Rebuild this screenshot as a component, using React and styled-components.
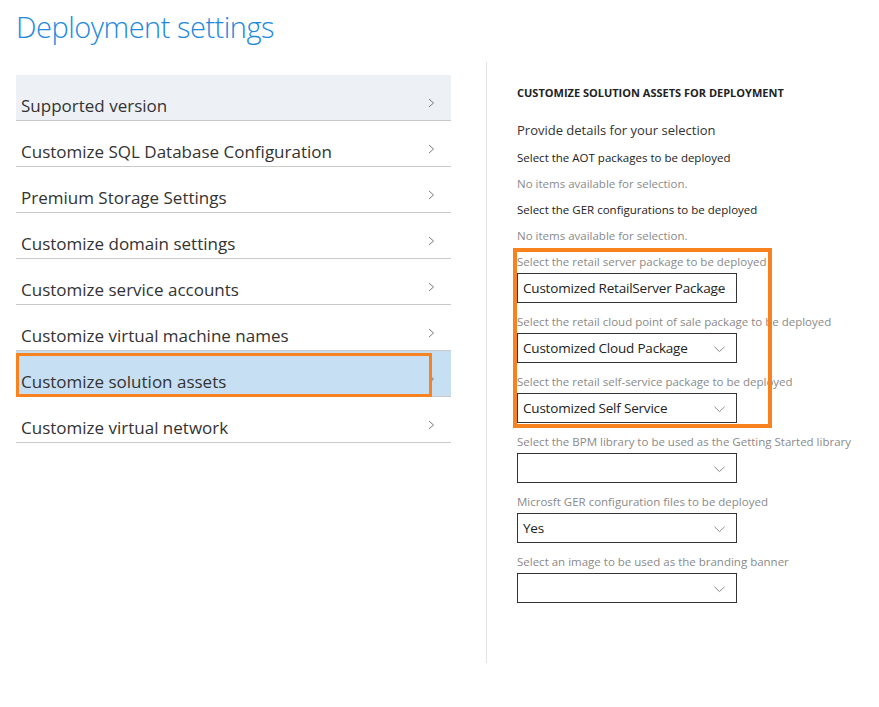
import React from "react";
import styled, { createGlobalStyle } from "styled-components";

const GlobalStyle = createGlobalStyle`
  html, body {
    margin: 0;
    padding: 0;
    background: #ffffff;
  }
  body {
    font-family: "Open Sans", "Noto Sans", sans-serif;
    color: #333;
  }
`;

const menuItems = [
  { label: "Supported version", hover: true },
  { label: "Customize SQL Database Configuration" },
  { label: "Premium Storage Settings" },
  { label: "Customize domain settings" },
  { label: "Customize service accounts" },
  { label: "Customize virtual machine names" },
  { label: "Customize solution assets", selected: true },
  { label: "Customize virtual network" },
];

const fields = [
  { label: "Select the retail server package to be deployed", value: "Customized RetailServer Package", marked: true },
  { label: "Select the retail cloud point of sale package to be deployed", value: "Customized Cloud Package", marked: true },
  { label: "Select the retail self-service package to be deployed", value: "Customized Self Service", marked: true },
  { label: "Select the BPM library to be used as the Getting Started library", value: "" },
  { label: "Microsft GER configuration files to be deployed", value: "Yes" },
  { label: "Select an image to be used as the branding banner", value: "" },
];

const Chevron = ({ className }) => (
  <svg className={className} width="7" height="10" viewBox="0 0 7 10" fill="none">
    <path d="M1 1 L5.5 5 L1 9" stroke="#7a7a7a" strokeWidth="1" />
  </svg>
);

const DownChevron = ({ className }) => (
  <svg className={className} width="11" height="7" viewBox="0 0 11 7" fill="none">
    <path d="M0.5 0.8 L5.5 5.6 L10.5 0.8" stroke="#8a8a8a" strokeWidth="1" />
  </svg>
);

const Settings = ({ label, value }) => (
  <Field>
    <FieldLabel>{label}</FieldLabel>
    <SelectBox>
      <SelectValue>{value}</SelectValue>
      <SelectArrow />
    </SelectBox>
  </Field>
);

const App = () => {
  const marked = fields.filter((f) => f.marked);
  const rest = fields.filter((f) => !f.marked);
  return (
    <>
      <GlobalStyle />
      <Page>
        <Title>Deployment settings</Title>
        <Main>
          <Menu>
            {menuItems.map((item) => (
              <MenuRow key={item.label} $hover={item.hover} $selected={item.selected}>
                <MenuText>{item.label}</MenuText>
                <RowChevron />
              </MenuRow>
            ))}
          </Menu>
          <Divider />
          <Details>
            <Heading>CUSTOMIZE SOLUTION ASSETS FOR DEPLOYMENT</Heading>
            <Intro>Provide details for your selection</Intro>
            <InfoLine>Select the AOT packages to be deployed</InfoLine>
            <InfoLine $muted>No items available for selection.</InfoLine>
            <InfoLine>Select the GER configurations to be deployed</InfoLine>
            <InfoLine $muted>No items available for selection.</InfoLine>
            <Fields>
              <Highlight>
                {marked.map((f) => (
                  <Settings key={f.label} label={f.label} value={f.value} />
                ))}
              </Highlight>
              {rest.map((f) => (
                <Settings key={f.label} label={f.label} value={f.value} />
              ))}
            </Fields>
          </Details>
        </Main>
      </Page>
    </>
  );
};

const Page = styled.div`
  width: 879px;
  height: 707px;
  box-sizing: border-box;
  padding: 9px 0 0 16px;
`;

const Title = styled.h1`
  margin: 0;
  font-size: 29px;
  line-height: 36px;
  font-weight: 300;
  color: #2189dc;
  letter-spacing: -0.5px;
`;

const Main = styled.div`
  display: flex;
  margin-top: 17px;
`;

const Menu = styled.div`
  width: 435px;
  padding-top: 13px;
`;

const MenuRow = styled.div`
  position: relative;
  height: 45px;
  box-sizing: content-box;
  display: flex;
  align-items: flex-start;
  justify-content: space-between;
  border-bottom: 1px solid #c9c9c9;
  background: ${(p) => (p.$selected ? "#c7dff2" : p.$hover ? "#edf0f4" : "transparent")};

  ${(p) =>
    p.$selected &&
    `
    &::after {
      content: "";
      position: absolute;
      top: 2px;
      left: 0;
      width: 416px;
      height: 44px;
      box-sizing: border-box;
      border: 3px solid #f7821e;
    }
  `}
`;

const MenuText = styled.span`
  padding: 20px 0 0 5px;
  font-size: 17px;
  line-height: 22px;
  color: #333;
`;

const RowChevron = styled(Chevron)`
  margin: 23px 16px 0 0;
`;

const Divider = styled.div`
  width: 1px;
  height: 601px;
  background: #e4e4e4;
  margin-left: 35px;
`;

const Details = styled.div`
  padding-left: 30px;
  padding-top: 23px;
  display: flex;
  flex-direction: column;
`;

const Heading = styled.h2`
  margin: 0;
  font-size: 11px;
  line-height: 16px;
  font-weight: 700;
  color: #222;
`;

const Intro = styled.div`
  margin: 18px 0 4px;
  font-size: 13px;
  line-height: 22px;
  color: #333;
`;

const InfoLine = styled.div`
  font-size: 11.5px;
  line-height: 26px;
  color: ${(p) => (p.$muted ? "#8a8a8a" : "#222")};
`;

const Fields = styled.div`
  margin-top: 4px;
  display: flex;
  flex-direction: column;
  gap: 10px;
`;

const Highlight = styled.div`
  position: relative;
  display: flex;
  flex-direction: column;
  gap: 10px;

  &::after {
    content: "";
    position: absolute;
    top: -5px;
    left: -4px;
    width: 259px;
    bottom: -5px;
    box-sizing: border-box;
    border: 4px solid #f7821e;
    pointer-events: none;
  }
`;

const Field = styled.div`
  display: flex;
  flex-direction: column;
  gap: 2px;
`;

const FieldLabel = styled.div`
  font-size: 11.5px;
  line-height: 18px;
  color: #8a8a8a;
  white-space: nowrap;
`;

const SelectBox = styled.div`
  position: relative;
  width: 220px;
  height: 30px;
  box-sizing: border-box;
  border: 1px solid #333;
  display: flex;
  align-items: center;
  padding-left: 5px;
`;

const SelectValue = styled.span`
  font-size: 13.5px;
  color: #222;
  white-space: nowrap;
  letter-spacing: -0.2px;
`;

const SelectArrow = styled(DownChevron)`
  position: absolute;
  right: 11px;
  top: 12px;
`;

export default App;
